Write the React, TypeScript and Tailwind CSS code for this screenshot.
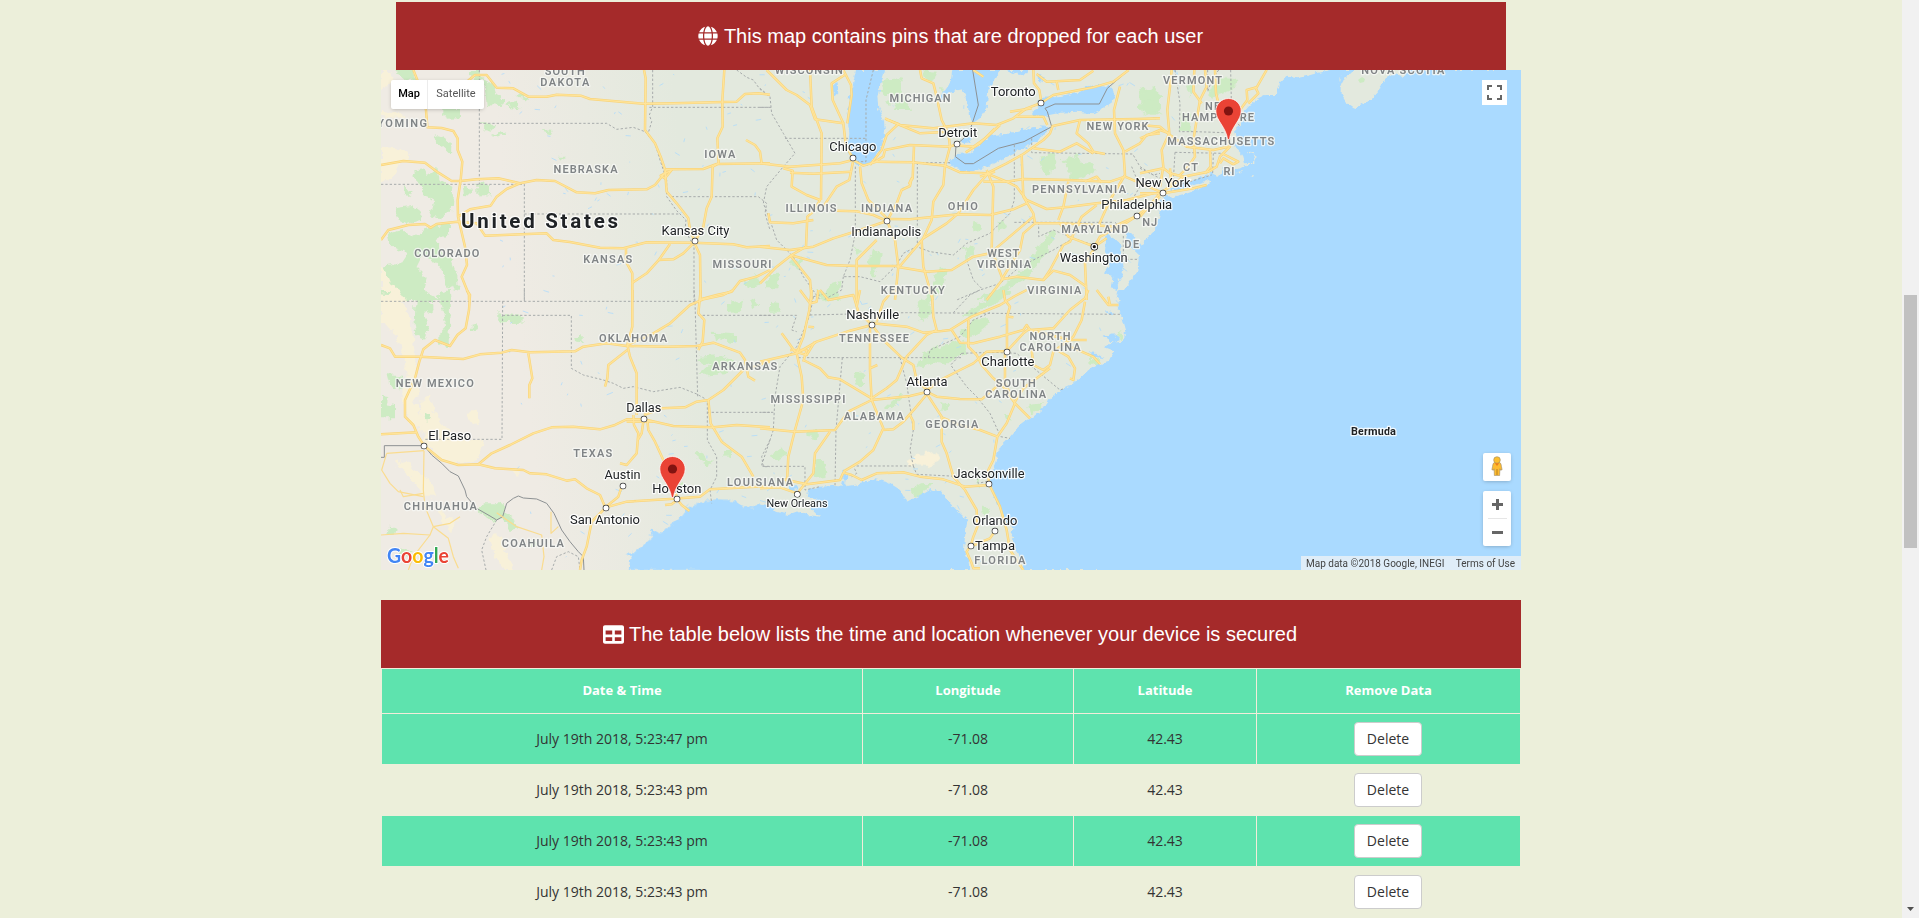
import React from "react";
import { FaGlobe, FaTable } from "react-icons/fa";

/* ------------------------------------------------------------------ */
/* Map geometry. Every sheet is surveyed at three units per map pixel. */
/* ------------------------------------------------------------------ */

type Sheet = {
  x: number;
  y: number;
  water: string[];
  land?: string[];
  sand?: string[];
  green: string[];
  roads: string[];
  thin?: string[];
  states: string[];
  nation?: string[];
};

const northWest: Sheet = {
  x: 370,
  y: 0,
  water: [],
  sand: [
    "M33 210H60L70 235L40 270L33 260Z",
    "M33 330L80 335L110 350L60 355L33 350Z",
    "M33 440L80 445L125 465L90 490L75 530L33 545Z",
    "M90 212L115 210L105 235Z",
    "M33 800L60 815L80 850L110 870L150 900H33Z",
  ],
  green: [
    "M80 210H125L140 235L150 242H110L90 225Z",
    "M300 210H325L340 235L370 250L380 285L402 300L392 318L350 315L342 240L310 240Z",
    "M217 327H270V355L235 356L217 345Z",
    "M408 312L440 305L452 325L425 322Z",
    "M440 282L470 290L478 300L450 294Z",
    "M335 370L375 372L370 392L345 388Z",
    "M362 408L408 390L400 404L375 410Z",
    "M516 390L545 392L540 406L522 400Z",
    "M568 470H590L585 480L570 478Z",
    "M188 404L215 412L245 432L243 460L222 440L195 420Z",
    "M278 560L308 563L306 584L282 582Z",
    "M322 551H360V586H322Z",
    "M133 508L160 505L170 525L205 500L212 540L250 560L245 630L215 655L180 650L195 600L165 590L158 560L135 545Z",
    "M100 560L125 575L118 592L98 580Z",
    "M75 625L120 618L152 630L150 665L110 672L80 655Z",
    "M55 700L100 690L140 710L180 680L240 670L240 700L200 720L215 760L245 780L262 830L262 870L235 860L215 810L190 780L160 760L140 800L170 830L160 870L215 900H110L90 870L60 850L40 800L90 790L110 760L65 740Z",
    "M1125 840L1160 825L1165 855L1130 868Z",
  ],
  roads: [
    "M130 210L150 260L168 330L172 382L215 384L250 393L263 415L263 450L277 485L272 540L263 600L264 650L285 740L291 795L275 830L297 885V900",
    "M33 495L100 483L165 488L205 518L245 543L272 543L320 538L385 535L450 550L500 540L555 543L620 577L675 580L715 570L830 568L855 555L885 518L890 508L1000 507L1040 492L1200 490",
    "M285 250L315 225L350 225L380 263L430 265L475 290L530 290L560 284L632 287L660 297L820 311L910 310L1060 306L1100 305L1125 282L1165 280L1200 284",
    "M822 210L827 235L825 390L855 430L872 470L885 508L890 575L920 610L955 655L960 690L975 725",
    "M1063 210L1057 300L1058 380L1042 415L1046 490L1028 500L1025 590L1010 625L1000 680L975 725",
    "M450 550L410 567L380 590L362 617L300 628L264 650",
    "M33 720L55 690L115 675L165 672L182 683L200 672L262 665L320 670L345 707L530 700L550 720L600 726L690 743L760 745L830 727L970 728L1090 733L1130 742L1200 738",
    "M768 745L768 785L787 820L787 900",
    "M785 850L830 820L868 778L900 732",
    "M865 780L910 778L940 760L970 730",
    "M973 728L990 765L992 900",
    "M992 898L1040 885L1085 875L1110 843L1160 830L1200 810",
    "M1128 420L1155 435L1170 455L1175 490",
    "M872 527L905 510L885 535Z",
  ],
  states: [
    "M328 210V553", "M33 553H463V900", "M463 642H925",
    "M328 370H710L740 388L790 382L825 395L855 430L870 480L890 540L890 590L920 632L948 660L945 690L972 740V900",
    "M848 210V320L838 345L845 365L836 395", "M838 322H1200",
    "M905 590H1165L1190 610L1185 640L1200 690", "M1100 210L1130 232L1150 240L1170 268L1200 290",
  ],
};

const northMiddle: Sheet = {
  x: 760,
  y: 0,
  water: [
    "M288 210L270 290L262 350L268 400L264 440L275 480L295 495L320 495L345 475L362 445L375 405L372 360L355 320L352 290L362 250L375 210Z",
    "M577 210L572 245L545 285L542 305L570 275L608 268L620 290L627 345L640 368L660 355L680 325L685 270L705 235L722 210Z",
    "M740 210L775 225L800 222L802 210Z",
    "M832 225L845 218L855 232L845 245L835 242Z",
    "M218 255L230 250L232 280L222 290Z",
    "M565 487L590 462L625 460L660 432L690 407L730 402L770 410L820 385L872 380L850 408L815 432L765 457L720 480L680 502L630 517L590 508Z",
    "M690 407L740 402L780 390L830 386L868 382L850 400L790 415Z",
    "M598 420L630 405L632 425L612 430Z",
    "M818 348L835 310L850 290L905 288L950 278L985 262L1015 255L1050 258L1064 275L1058 305L1035 322L1000 340L950 335L900 338L868 345L855 352L840 348Z",
    "M1200 672L1185 695L1160 715L1145 737L1128 715L1105 690L1095 700L1110 740L1137 765L1132 815L1108 845L1092 870L1078 900H1200Z",
    "M1040 700L1060 712L1085 735L1082 770L1092 800L1085 830L1070 850L1072 870L1055 865L1060 830L1030 820L1050 790L1035 750Z",
  ],
  sand: [],
  green: [
    "M360 240L420 235L430 270L450 330L405 330L395 285L370 285Z", "M375 305L395 310L385 320Z",
    "M490 210L530 215L522 245L500 240Z", "M530 258L555 260L548 275Z",
    "M840 470L875 462L888 500L860 520L838 505Z",
    "M905 478L950 465L965 490L1010 490L1005 515L965 535L925 540L925 505Z",
    "M1135 270L1185 262L1200 290V330L1165 345L1140 300Z",
    "M640 672L662 675L655 695L640 688Z", "M710 665L740 668L735 690L712 695Z",
    "M612 745L645 742L640 765L618 770Z",
    "M870 700L885 695L870 740L840 790L800 835L740 870L710 900H640L690 880L740 850L800 800L830 750Z",
    "M335 755L365 760L358 800L340 830L325 800Z", "M215 855L245 845L235 900H190L200 870Z",
    "M25 820L60 818L55 865L22 865Z", "M540 800L560 810L550 860L520 900H500L515 850Z", "M90 790L130 770L115 810Z",
    "M280 740L310 750L290 765Z",
  ],
  roads: [
    "M20 210L80 270L110 285L150 315L165 358L250 370L258 440L279 474",
    "M150 210L155 320L185 400L183 600", "M250 210L273 255L275 285L262 370", "M258 222L215 250L218 300L250 370",
    "M0 490L90 500L240 490L279 480L310 497L350 485L460 487L555 497L600 517L680 520L740 490L790 462L850 420L870 400L878 378L960 360L1130 357L1200 355",
    "M70 505L98 512L95 560L140 585L180 600L160 635L142 650L138 740L95 765", "M90 518L160 521L275 515",
    "M0 740L90 750L160 740L220 715L300 690L381 663", "M25 640L30 667L100 670L160 660",
    "M279 485L268 540L230 560L190 620", "M300 500L305 550L325 600L381 655", "M230 632L290 634L340 645L381 663",
    "M381 663L410 610L425 570L450 558L455 535L448 550L458 535L462 440", "M345 485L370 470L375 450L450 435L570 440L591 432",
    "M378 358L415 372L380 405L365 450L330 495", "M375 355L420 375L520 385L640 370L710 375",
    "M420 375L480 400L565 395", "M480 210L485 235L520 250L530 290L545 360L565 400L570 440L555 497L550 555L520 605L515 660L490 715",
    "M710 375L760 355L800 325L843 309L880 285L1000 262L1060 245L1106 210", "M600 437L640 440L680 412L720 375", "M617 457L660 430L705 385",
    "M820 210L822 250L838 270L843 300", "M750 335L815 325", "M765 350L850 350L862 375", "M890 245L895 270",
    "M830 222L860 245L960 240L1000 212", "M640 210L670 230",
    "M381 657L450 658L595 643L690 645L760 628L800 610", "M680 525L640 570L595 640L560 670L490 715L420 798L290 798L200 795L90 765",
    "M680 520L740 545L790 537L925 540L1050 545L1095 530L1200 575",
    "M680 510L700 560L695 750L728 838L680 900", "M670 545H740", "M660 530L705 515",
    "M785 465L790 590L820 640L825 670L900 670L1000 675L1060 680L1131 648", "M740 545L770 560L800 600L860 627L930 620L1010 610L1100 600L1180 580",
    "M825 670L790 700L780 750L725 838L770 830L850 840L870 810L910 735L930 725L955 670L965 650L1010 615",
    "M900 670L925 710L1003 740", "M1003 740L1020 710L1080 680L1131 648L1200 590", "M1010 690L1050 600L1095 525L1090 450L1065 400L1062 330L1080 260",
    "M1003 745L975 790L980 900", "M1003 740L1040 715", "M960 360L950 400L985 430L1000 455L1035 462", "M820 445L900 455L950 430L1000 460",
    "M1095 455L1140 430L1160 405L1200 400", "M381 663L405 720L415 800L405 900", "M485 720L490 800L510 870L518 900",
    "M410 800L500 815L575 810L640 770", "M350 720L290 780L290 900", "M90 765L150 840L155 900", "M95 765L50 800L0 850",
    "M850 840L880 812L930 825L980 860", "M640 770L690 760L820 650", "M895 660L910 620L925 545", "M975 545L1010 530L1025 548",
  ],
  states: [
    "M0 265L30 290L35 340L70 400L105 460L70 500L20 560L10 610L30 660L50 720L100 770L130 830L180 900",
    "M0 322H33", "M75 415H320", "M340 210L318 300V485H286", "M286 500V700L270 780L250 830H300L360 845L410 795L430 760L470 740L510 755L580 765L620 730L690 700L750 640L763 600V435",
    "M472 488V740", "M472 488H575", "M763 667H1060", "M815 415V458L1118 462L1140 500L1180 525L1200 520",
    "M836 667V710L880 690L940 715L1000 735", "M940 715L880 750L780 800L720 850L660 870L590 900", "M620 780L640 840L665 865", "M250 830L245 870L190 900", "M1065 667L1090 690V778H1137", "M1110 610L1140 560L1115 500",
  ],
  nation: ["M638 210L655 315L635 375L628 400L588 435L586 470L615 491H640L715 445L792 425L875 380L862 335L855 325L885 312H1018L1042 265L1106 210"],
};

const northEast: Sheet = {
  x: 1140,
  y: 0,
  water: [
    "M570 210L530 220L500 228L470 235L440 230L420 250L410 285L380 285L350 300L330 315L312 335L300 352L300 378L285 392L290 410L300 420L282 432L290 450L305 465L312 490L335 488L343 478L338 462L325 457L335 455L346 468V492H320L298 505L270 517L252 500L240 527L215 522L190 530L160 540L125 548L100 562L90 570L120 570L205 540L215 545L190 562L140 580L100 590L75 588L62 600L66 620L58 650L45 690L25 712L5 738L0 735V900H1143V210Z",
    "M107 210L112 235L118 290L110 230L103 210Z",
  ],
  land: [
    "M650 210L620 225L605 255L605 285L620 310L643 326L665 312L690 300L715 272L735 240L760 222L790 228L800 210Z",
    "M286 520L305 513L303 520Z", "M330 528L345 525L342 531Z", "M592 250L605 230L600 235Z",
  ],
  green: [
    "M0 265L20 270L10 280L0 282Z", "M0 310L35 300L45 330L65 345L25 345L0 335Z", "M122 340L150 345L145 395L120 392Z",
    "M205 275L240 230L290 240L285 262L240 285L215 290Z", "M140 250L160 255L155 285Z",
  ],
  roads: [
    "M95 210L90 260L82 330L88 400L65 450L70 500L60 560", "M195 210L200 260L180 300L160 420L165 470L145 500L115 530", "M225 210L228 280L245 350L270 420",
    "M380 210L350 262L320 270L322 300L285 350L265 420L270 440L240 470L230 500L205 515L130 530L90 560L60 580",
    "M0 375L60 380L90 405L140 440L220 450L265 440", "M250 462L295 485L280 493L250 475L240 490", "M0 415L60 390L88 400",
    "M0 520L70 505L90 520L130 530", "M69 580L160 565L200 555", "M0 580L60 580L0 650", "M163 210L160 275L185 310", "M210 450L212 500L195 520",
    "M90 505L95 560", "M345 260L355 280L325 310",
  ],
  states: ["M105 210L120 310L118 395H165L255 398", "M203 210V275", "M272 210L275 350L300 378", "M105 457L250 460", "M105 457L100 540", "M220 460L218 520", "M0 505L60 535", "M236 210L215 240L203 275", "M100 560L215 525"],
};

const southWest: Sheet = {
  x: 370,
  y: 290,
  water: ["M776 840L782 800L765 790L795 785L820 765L850 740L840 715L865 730L900 710L935 680L955 655L990 635L1040 628L1090 630L1120 648L1150 655L1170 640L1200 655V840Z"],
  sand: [
    "M33 0H70L110 60L125 100L130 160L140 220L135 270L145 310L130 330L150 360L160 420L120 400L95 330L110 260L100 180L60 110L33 100Z",
    "M155 330L180 320L185 345L215 400L260 440L340 450L330 500L280 520L220 510L170 470L150 400Z",
    "M290 365L320 362L330 400L300 395Z", "M75 520L110 510L130 540L180 570L200 620L160 620L120 560Z", "M360 740L380 730L400 760L430 840H400L370 790Z", "M200 640L230 680L260 690L250 730L215 700Z",
    "M425 540L450 545L440 560Z",
  ],
  green: [
    "M135 0H155V20L190 40V60L165 75L180 110L165 150L140 140L132 80Z", "M205 10L240 0L243 60L240 110L235 165L205 160V130L225 110L220 60Z", "M33 0H60L50 12L33 10Z",
    "M385 70L455 78L455 95L385 97Z", "M610 138H635V158L612 152Z", "M33 318L55 322L50 340L78 345V385L33 385Z", "M50 255L105 260L100 300L70 295L55 275Z",
    "M1068 40L1120 30L1110 65L1075 70Z", "M1140 30L1165 40L1150 55Z", "M1030 125L1095 130V160L1035 150Z", "M990 200L1050 195L1100 215L1060 250L985 255L1020 225L985 215Z",
    "M980 490L1005 488L1000 510L1030 515L1010 530L985 515Z", "M1060 480H1080V500H1060Z", "M345 640L400 640L405 680L370 695L340 675L318 665Z", "M400 665L425 680L445 715L425 720L405 695Z",
    "M60 710L80 715L75 735L55 730Z", "M90 775L125 780L115 800L90 795Z", "M160 375L185 370L180 392L162 390Z", "M305 105L325 100L320 115L305 118Z", "M475 750L500 755L490 775Z", "M925 580L945 575L940 600Z",
  ],
  roads: [
    "M290 0L300 15L297 60L287 115L262 135L240 168L195 150L160 178L148 215L135 265L105 330L105 380L130 405L145 440L162 467L215 510L265 525L325 523L375 535L460 540L480 550L530 553L590 572L615 568L650 595L690 615L705 650",
    "M33 165L60 175L75 200L150 200L280 207L330 193L395 188L425 180L480 187L615 184L640 170L710 160L770 168L890 170L980 168L1030 158L1110 188L1125 210L1135 260L1155 272",
    "M475 190L487 265L478 285V325", "M787 0V110L772 165L780 200L800 250V375", "M772 180L715 225L712 265L705 290",
    "M772 165L850 130L900 100L960 45L1000 28L1060 15L1090 0", "M992 0L985 70L1003 90L998 155L985 180", "M33 433L140 427",
    "M325 523L365 490L420 465L490 430L545 412L610 410L690 418L735 405L770 388L822 388L910 408L1030 412L1100 405L1200 412",
    "M822 375L875 355L945 352L980 335L1015 330L1060 300L1120 240L1200 215", "M1015 330L1022 400L1055 455L1115 500L1150 560",
    "M832 390L835 420L855 455L880 510L905 560L921 625", "M790 375L792 405L805 430L800 490L770 525L750 520", "M820 395L815 430L803 450", "M770 395H850",
    "M755 590L745 620L708 650", "M708 652L770 635L900 627L990 620L1020 598L1200 588", "M708 652L665 695L650 770L635 810L630 840", "M921 627L935 645L958 663", "M885 645L905 643L921 630",
  ],
  thin: ["M50 490L35 540L60 580L85 605L160 620", "M162 482L160 600L165 650L190 710L235 745L250 800L265 835", "M33 735L100 730L180 735L190 710", "M180 735L130 800L115 840", "M50 490L162 482", "M380 668L440 710L515 735L522 800L515 840", "M543 665V730L565 710", "M90 600L100 620L160 610", "M190 710L240 700L270 680"],
  states: [
    "M33 34H975", "M463 0V34", "M398 34L396 448H162", "M398 76H604V235L640 255L700 270L730 280L760 295L790 290L850 305L930 292L980 312L1012 330V450L1040 500V560L1020 600L1025 640",
    "M972 0L975 34L983 320", "M985 76H1200", "M1012 367H1200", "M1200 450L1175 500L1180 530H1200", "M380 690L350 740L335 780L348 840", "M545 840L560 800L595 785L625 800L630 840",
  ],
  nation: ["M33 502H43V467H162L185 495L215 520L240 545L265 558L285 600L290 620L320 655L360 678L380 690L398 680L410 640L430 625L445 618L460 624L500 627L530 640L552 670L575 720L600 755L625 785L640 800L642 840"],
};

const southMiddle: Sheet = {
  x: 760,
  y: 290,
  water: [
    "M1075 0L1070 20L1082 35L1070 50L1085 75L1098 120L1088 155L1055 158L1035 172L1062 182L1045 215L1000 228L960 262L935 285L900 300L870 325L850 355L820 380L795 395L775 410L750 440L725 465L712 490L705 520L697 545L693 575L700 610L718 650L735 690L760 715L755 735L765 770L780 810L792 840H1440V0Z",
    "M0 640L20 645L50 665L85 675L120 662L140 675L180 680L155 655L170 625L140 620L145 598L180 590L225 588L245 590L250 572L262 588L300 582L345 568L380 575L420 600L440 635L480 615L510 597L545 605L570 640L600 670L622 690L615 740L612 780L622 800L630 840H0Z",
    "M1030 140L1060 130L1080 150L1060 160Z", "M1035 205L1000 200L985 190L1010 192Z", "M250 540L262 560L258 580L250 565Z", "M80 590L110 585L115 598L90 600Z",
    "M1035 60L1060 70L1050 76Z",
  ],
  sand: ["M440 515L480 490L530 485L540 510L510 528L450 525Z"],
  green: [
    "M475 225L490 190L540 170L600 150L625 165L620 190L580 205L560 225L520 215L490 232Z", "M600 130L640 90L680 75L690 100L650 130L615 150Z", "M630 60L690 25L740 0H760L740 20L690 45L650 75L600 85Z",
    "M470 60L485 25L510 30L515 70L490 95L475 85Z", "M282 252L310 250L315 285L290 285Z", "M375 350L400 330L425 310V330L395 358Z", "M160 515L195 512L200 560L170 565Z", "M30 490L70 475L75 495L50 510L32 505Z",
    "M138 422H170V445L140 440Z", "M450 598L480 580L520 578L500 605L465 625Z", "M805 345L850 340L830 360L810 375Z", "M990 200L1015 205L1012 225L992 220Z", "M540 345L560 335L568 345L550 360Z", "M165 0L190 10L220 0V30L190 35Z",
    "M30 35L60 40L65 65L30 65Z", "M665 650L685 655L690 680L668 675Z", "M730 375H750V388H730Z", "M650 570L660 560L655 590Z", "M1075 125L1090 128L1088 148L1075 150Z",
  ],
  roads: [
    "M336 105L270 122L170 155L110 190L0 215", "M340 100L440 110L490 128L545 123L570 120L635 80L720 45L765 18L800 0", "M155 0L148 60L130 140L110 190L125 260L130 330L105 420L85 500L80 590",
    "M180 0L205 30L280 15L295 65L336 105", "M300 0L290 50", "M65 130L80 150L105 185L140 195L165 155", "M90 180H140L130 215", "M145 110L162 112", "M400 0L370 35L350 95",
    "M330 110L330 240L335 330L370 415L340 480L300 515L250 545", "M340 110L370 150L425 203L460 225L470 270L501 300", "M515 0L520 80L530 120L500 135L440 200L410 270L380 295L335 325",
    "M0 415L105 425L225 420L265 365L335 330L450 318L500 306", "M130 210L180 235L205 262L240 268L335 325", "M575 120L600 158L640 160L720 140L790 120L800 105L810 120L880 115L930 60L975 25L985 0",
    "M625 90L625 170L650 195L665 225L700 265L730 290L765 340L810 385", "M501 306L530 320L600 327L665 328L710 290L735 280", "M501 300L545 268L600 240L640 220L680 185L741 183L790 130L810 115",
    "M741 183V80L750 50L735 30L730 0", "M760 82L745 80", "M735 190V280L765 340L740 400L712 440L700 510L685 540L687 582L720 650L740 720L750 780L790 840",
    "M810 120L850 130L930 150L980 150", "M975 35L965 90L940 140L880 185L870 225L850 240L820 225L815 180", "M870 235L790 295L765 335", "M930 170L1000 200L1020 222", "M890 180L925 200L945 235L940 270L930 265",
    "M501 312L545 380V455L560 490L580 560L615 600L650 660L652 710L640 740L633 765L620 785L635 820L640 835H660", "M545 382L600 405L660 420L712 440", "M501 312L465 355L430 395L400 418L370 420", "M450 375L460 395V420",
    "M0 595L60 592L112 610", "M70 568L140 583L240 570L250 548L275 555L305 570L350 550L430 547L480 560L550 568L615 590L687 585", "M210 425L165 490L160 550L112 610", "M705 723L690 745L650 762L633 768",
    "M1010 0L1045 45L1075 45", "M1045 20L1050 45", "M330 235L352 225", "M120 0L150 40L170 35L175 0",
  ],
  states: [
    "M0 76H110L95 120L110 125", "M160 20L150 75L110 170L60 230L45 320L40 420L5 525V529H135V600L180 590", "M150 75L440 68L1085 73", "M115 203H605", "M247 203L228 420L225 590",
    "M420 203L440 280L460 420L450 480L460 528H280L290 550L275 560", "M460 528L470 553L650 562L655 580L690 572", "M605 190L572 225L620 290L650 320L690 370L722 440L750 445", "M605 190L700 187L770 190L810 225L900 300L915 295",
    "M505 203L510 180L600 140L640 90L690 68", "M160 20L200 10", "M580 68L630 15L660 0", "M40 367H0",
  ],
};

const sheets: Sheet[] = [northWest, northMiddle, northEast, southWest, southMiddle];

/* Small streams and ponds, scattered deterministically over the plains. */
const streams: string[] = (() => {
  let seed = 71;
  const next = () => {
    seed = (seed * 16807) % 2147483647;
    return seed / 2147483647;
  };
  const out: string[] = [];
  for (let i = 0; i < 330; i++) {
    const x = 500 + next() * 680;
    const y = 74 + next() * 490;
    const dx = (next() - 0.4) * 9;
    const dy = (next() - 0.4) * 6;
    out.push(`M${x.toFixed(1)} ${y.toFixed(1)}l${dx.toFixed(1)} ${dy.toFixed(1)}`);
  }
  return out;
})();

type Label = [text: string, cx: number, baseline: number, width: number];

const stateLabels: Label[] = [
  ["SOUTH", 564.7, 74.7, 40], ["DAKOTA", 564.8, 85.7, 49], ["WYOMING", 396.5, 127, 61], ["IOWA", 719.8, 158, 31], ["NEBRASKA", 585.5, 173, 64],
  ["COLORADO", 446.8, 257, 65], ["KANSAS", 607.8, 263, 49], ["MISSOURI", 742, 268, 59], ["WISCONSIN", 808.8, 73.5, 68], ["MICHIGAN", 920, 102, 61],
  ["NEW YORK", 1117.5, 130, 62], ["ILLINOIS", 811, 212, 51], ["INDIANA", 886.5, 212, 51], ["OHIO", 962.8, 210, 30], ["PENNSYLVANIA", 1079, 193, 94],
  ["MARYLAND", 1094.8, 233, 67], ["DE", 1131.7, 248, 15], ["NJ", 1149.7, 225.7, 15], ["WEST", 1003.3, 257, 32], ["VIRGINIA", 1004, 268, 54],
  ["KENTUCKY", 912.8, 294, 64], ["VIRGINIA", 1054.3, 294, 54], ["VERMONT", 1192.5, 84, 59], ["NEW", 1218, 110, 26], ["HAMPSHIRE", 1218, 121, 72],
  ["MASSACHUSETTS", 1220.8, 145, 107], ["CT", 1190.5, 171, 15], ["RI", 1229, 175, 11], ["NOVA SCOTIA", 1402.8, 73.5, 83], ["OKLAHOMA", 633, 342, 68],
  ["ARKANSAS", 744.8, 370, 65], ["NEW MEXICO", 434.8, 387, 78], ["TEXAS", 592.7, 457, 39], ["LOUISIANA", 760, 486, 66], ["CHIHUAHUA", 440.3, 510, 73],
  ["COAHUILA", 532.8, 547, 62], ["TENNESSEE", 874, 342, 70], ["NORTH", 1050, 340, 41], ["CAROLINA", 1050, 351, 61], ["SOUTH", 1015.7, 387, 40],
  ["CAROLINA", 1015.7, 398, 61], ["MISSISSIPPI", 808, 403, 75], ["ALABAMA", 873.8, 420, 60], ["GEORGIA", 951.8, 428, 53], ["FLORIDA", 999.8, 564, 51],
];

const cityLabels: Label[] = [
  ["Kansas City", 695.5, 235.5, 68], ["Toronto", 1013.3, 96.7, 45], ["Detroit", 957.7, 137.7, 39], ["Chicago", 852.8, 151.7, 47], ["Philadelphia", 1136.7, 209.7, 71],
  ["New York", 1163, 187.7, 55], ["Indianapolis", 886.3, 236.5, 70], ["Washington", 1093.7, 262.5, 68], ["Dallas", 643.8, 412.5, 35], ["El Paso", 449.7, 440.5, 43],
  ["Austin", 622.5, 479.5, 36], ["Houston", 676.8, 493.7, 49], ["San Antonio", 605, 524, 70], ["Nashville", 872.7, 319.7, 53], ["Charlotte", 1007.8, 366.5, 53],
  ["Atlanta", 927, 386.7, 41], ["Jacksonville", 989, 478.7, 71], ["Orlando", 994.8, 525.7, 45], ["Tampa", 995, 550.7, 40],
];

const cityDots: [number, number][] = [
  [695, 241], [1041, 103], [957, 144], [853, 158], [1137, 216], [1163, 193], [887, 221], [644, 419], [424, 446], [623, 486], [677, 499],
  [606, 508], [872, 325], [1007, 352], [927, 392], [989, 484], [797.3, 494.3], [995, 531], [971, 546],
];

const toSheet = (s: Sheet) => `translate(${s.x} ${s.y}) scale(0.33333)`;

function Paths({ list }: { list?: string[] }) {
  return (
    <>
      {(list ?? []).map((d, i) => (
        <path key={i} d={d} />
      ))}
    </>
  );
}

function Layer({ pick, ...rest }: { pick: keyof Sheet } & React.SVGProps<SVGGElement>) {
  return (
    <g {...rest}>
      {sheets.map((s, i) => (
        <g key={i} transform={toSheet(s)}>
          <Paths list={s[pick] as string[] | undefined} />
        </g>
      ))}
    </g>
  );
}

function Pin({ x, y }: { x: number; y: number }) {
  return (
    <g transform={`translate(${x} ${y})`}>
      <path
        d="M0 -41C-7 -41 -12.7 -35.4 -12.7 -28.5C-12.7 -19 -2.6 -13 -0.9 0H0.9C2.6 -13 12.7 -19 12.7 -28.5C12.7 -35.4 7 -41 0 -41Z"
        fill="#ea4335"
        stroke="#fff"
        strokeOpacity=".75"
        strokeWidth="1"
      />
      <circle cx="0" cy="-28.5" r="4.6" fill="#811411" />
    </g>
  );
}

function MapCanvas() {
  return (
    <svg className="block h-[500px] w-[1140px]" viewBox="381 70 1140 500" fontFamily="Roboto, sans-serif">
      <defs>
        <linearGradient id="land" gradientUnits="userSpaceOnUse" x1="520" y1="340" x2="700" y2="320">
          <stop offset="0" stopColor="#efebe4" />
          <stop offset=".5" stopColor="#e9eae1" />
          <stop offset="1" stopColor="#e3e9de" />
        </linearGradient>
        <filter id="ragged" filterUnits="userSpaceOnUse" x="360" y="50" width="1180" height="540">
          <feTurbulence type="fractalNoise" baseFrequency="0.14" numOctaves="3" seed="4" />
          <feDisplacementMap in="SourceGraphic" scale="9" xChannelSelector="R" yChannelSelector="G" />
        </filter>
        <filter id="coast" filterUnits="userSpaceOnUse" x="360" y="50" width="1180" height="540">
          <feTurbulence type="fractalNoise" baseFrequency="0.2" numOctaves="2" seed="9" />
          <feDisplacementMap in="SourceGraphic" scale="6" xChannelSelector="R" yChannelSelector="G" />
        </filter>
      </defs>
      <rect x="381" y="70" width="1140" height="500" fill="url(#land)" />
      <Layer pick="sand" fill="#f8f1d9" filter="url(#ragged)" />
      <Layer pick="green" fill="#cdebc3" filter="url(#ragged)" />
      <g stroke="#aadaff" strokeWidth=".9" strokeLinecap="round" opacity=".8">
        <Paths list={streams} />
      </g>
      <Layer pick="water" fill="#aadaff" filter="url(#coast)" />
      <rect x="1155" y="280" width="366" height="290" fill="#aadaff" />
      <rect x="1100" y="460" width="421" height="110" fill="#aadaff" />
      <rect x="1514" y="70" width="7" height="500" fill="#aadaff" />
      <rect x="700" y="560" width="250" height="10" fill="#aadaff" />
      <Layer pick="land" fill="#e3e9de" filter="url(#coast)" />
      <path d="M1358 80l4-3 3 2-1 3-4 1z" fill="#cdebc3" />
      <Layer pick="states" fill="none" stroke="#a7abab" strokeWidth="3" strokeDasharray="7 6" />
      <Layer pick="nation" fill="none" stroke="#8d9193" strokeWidth="3" />
      <Layer pick="roads" fill="none" stroke="#f9d57c" strokeWidth="7.5" strokeLinejoin="round" />
      <Layer pick="roads" fill="none" stroke="#ffe49a" strokeWidth="3.5" strokeLinejoin="round" />
      <Layer pick="thin" fill="none" stroke="#fadc8f" strokeWidth="3.6" strokeLinejoin="round" />

      <g textAnchor="middle" strokeLinejoin="round" paintOrder="stroke">
        <g fontSize="11" fontWeight="600" fill="#808486" stroke="#f6f7f3" strokeOpacity=".85" strokeWidth="2.5">
          {stateLabels.map(([t, x, y, w], i) => (
            <text key={i} x={x} y={y} textLength={w}>
              {t}
            </text>
          ))}
        </g>
        <g fill="#fff" stroke="#333" strokeWidth="1.4">
          {cityDots.map(([x, y], i) => (
            <circle key={i} cx={x} cy={y} r="2.6" />
          ))}
        </g>
        <circle cx="1094.3" cy="246.7" r="3" fill="#fff" stroke="#111" strokeWidth="1.5" />
        <circle cx="1094.3" cy="246.7" r="1.6" fill="#111" />
        <g fontSize="13.4" fill="#202326" stroke="#fff" strokeOpacity=".85" strokeWidth="2.5">
          {cityLabels.map(([t, x, y, w], i) => (
            <text key={i} x={x} y={y - 0.5} textLength={w} lengthAdjust="spacingAndGlyphs">
              {t}
            </text>
          ))}
          <text x="797" y="506.5" fontSize="11" textLength="61" lengthAdjust="spacingAndGlyphs">
            New Orleans
          </text>
          <text x="1373.5" y="434.5" fontSize="11" fontWeight="700" textLength="45">
            Bermuda
          </text>
          <text x="539.5" y="228" fontSize="20.5" fontWeight="700" textLength="157">
            United States
          </text>
        </g>
      </g>
      <Pin x={1228.5} y={139.500} />
      <Pin x={672.5} y={497.500} />
      <text x="387" y="563" fontSize="21.5" fontFamily="Lato, sans-serif" fontWeight="700" textLength="62" lengthAdjust="spacingAndGlyphs" stroke="#fff" strokeWidth="2" strokeLinejoin="round" paintOrder="stroke">
        <tspan fill="#4285f4">G</tspan>
        <tspan fill="#ea4335">o</tspan>
        <tspan fill="#fbbc05">o</tspan>
        <tspan fill="#4285f4">g</tspan>
        <tspan fill="#34a853">l</tspan>
        <tspan fill="#ea4335">e</tspan>
      </text>
    </svg>
  );
}

function MapControls() {
  return (
    <div className="font-['Roboto',sans-serif]">
      <div className="absolute top-[10px] left-[10px] flex h-[29px] w-[93px] rounded-[2px] bg-white text-[11px] shadow-[0_1px_4px_-1px_rgba(0,0,0,0.3)]">
        <div className="flex w-[37px] items-center justify-center border-r border-[#ececec] font-medium text-black">Map</div>
        <div className="flex flex-1 items-center justify-center text-[#565656]">Satellite</div>
      </div>
      <div className="absolute top-[10px] right-[14px] flex size-[25px] items-center justify-center bg-white">
        <svg className="size-[15px]" viewBox="0 0 15 15" fill="none" stroke="#666" strokeWidth="2">
          <path d="M1 5V1H5M10 1H14V5M14 10V14H10M5 14H1V10" />
        </svg>
      </div>
      <div className="absolute right-[10px] bottom-[24px] flex flex-col gap-[10px]">
        <div className="flex size-[28px] items-start justify-center rounded-[2px] bg-white pt-[3px] shadow-[0_1px_4px_-1px_rgba(0,0,0,0.3)]">
          <svg className="h-[20px] w-[12px]" viewBox="0 0 12 20">
            <path d="M3.200 6.600h5.600c1 .5 1.400 2 1.600 3.700l.7 3.400-1.600.5-.6-1.400-.3 6.800H3.400l-.3-6.800-.6 1.400-1.600-.5.7-3.400C1.800 8.600 2.200 7.100 3.200 6.600z" fill="#fdbb30" stroke="#9a8a6a" strokeWidth=".6" />
            <circle cx="6" cy="4" r="3.3" fill="#fdbf2d" stroke="#9a8a6a" strokeWidth=".6" />
            <path d="M3.800 7.200h4.400L6 10z" fill="#ee7d1a" />
            <path d="M6 13v6" stroke="#b07a1c" strokeWidth=".9" />
          </svg>
        </div>
        <div className="flex h-[55px] w-[28px] flex-col items-center rounded-[2px] bg-white shadow-[0_1px_4px_-1px_rgba(0,0,0,0.3)]">
          <div className="flex h-[27px] items-center">
            <svg className="size-[11px]" viewBox="0 0 11 11" stroke="#666" strokeWidth="3">
              <path d="M0 5.500H11M5.500 0V11" />
            </svg>
          </div>
          <div className="h-px w-[19px] bg-[#e6e6e6]" />
          <div className="flex h-[27px] items-center">
            <svg className="size-[11px]" viewBox="0 0 11 11" stroke="#666" strokeWidth="3">
              <path d="M0 5.500H11" />
            </svg>
          </div>
        </div>
      </div>
      <div className="absolute right-0 bottom-0 flex h-[14px] w-[220px] items-center justify-between bg-[#f5f5f5]/70 pr-[6px] pl-[5px] text-[10px] whitespace-nowrap text-[#444]">
        <span>Map data ©2018 Google, INEGI</span>
        <span>Terms of Use</span>
      </div>
    </div>
  );
}

const rows = ["July 19th 2018, 5:23:47 pm", "July 19th 2018, 5:23:43 pm", "July 19th 2018, 5:23:43 pm", "July 19th 2018, 5:23:43 pm"];
const columns = "grid grid-cols-[480px_210px_182px_263px] gap-px";

function Row({ time, shaded }: { time: string; shaded: boolean }) {
  const cell = shaded ? "flex items-center justify-center bg-[#5ee3ae]" : "flex items-center justify-center";
  return (
    <div className={`${columns} h-[50px] ${shaded ? "bg-[#f3ecda]" : ""}`}>
      <div className={`${cell} pb-[2px]`}>{time}</div>
      <div className={`${cell} pb-[2px]`}>-71.08</div>
      <div className={`${cell} pb-[2px]`}>42.43</div>
      <div className={`${cell} pr-px`}>
        <button className="h-[34px] w-[68px] rounded-[4px] border border-[#ccc] bg-white pb-px">Delete</button>
      </div>
    </div>
  );
}

export default function App() {
  return (
    <div className="flex h-[918px] w-full overflow-hidden bg-[#ecefda]">
      <main className="flex flex-1 flex-col items-center pt-[2px]">
        <h2 className="flex h-[68px] w-[1110px] items-center justify-center gap-[6px] bg-[#a52a2a] pr-[1px] font-['Liberation_Sans',sans-serif] text-[20px] text-white">
          <FaGlobe className="size-[20px]" />
          <span>This map contains pins that are dropped for each user</span>
        </h2>
        <section className="relative h-[500px] w-[1140px] overflow-hidden">
          <MapCanvas />
          <MapControls />
        </section>
        <h2 className="mt-[30px] flex h-[68px] w-[1140px] shrink-0 items-center justify-center gap-[5px] bg-[#a52a2a] pr-[2px] font-['Liberation_Sans',sans-serif] text-[20px] text-white">
          <FaTable className="size-[21px]" />
          <span>The table below lists the time and location whenever your device is secured</span>
        </h2>
        <section className="flex w-[1140px] flex-col gap-px border-t border-[#f3ecda] px-px font-['Trebuchet_MS','Open_Sans',sans-serif] text-[14px] text-[#333]">
          <div className={`${columns} -mb-px h-[45px] border-b border-[#f3ecda] bg-[#f3ecda] text-[13px] font-bold text-white`}>
            {["Date & Time", "Longitude", "Latitude", "Remove Data"].map((h) => (
              <div key={h} className="flex items-center justify-center bg-[#5ee3ae] pb-[1px]">
                {h}
              </div>
            ))}
          </div>
          {rows.map((time, i) => (
            <Row key={i} time={time} shaded={i % 2 === 0} />
          ))}
        </section>
      </main>
      <aside className="flex h-full w-[17px] shrink-0 flex-col items-center bg-[#f1f1f1] pt-[295px]">
        <div className="h-[253px] w-[13px] bg-[#c1c1c1]" />
        <svg className="mt-auto mb-[7px] h-[4px] w-[7px]" viewBox="0 0 7 4" fill="#505050">
          <path d="M0 0H7L3.500 4Z" />
        </svg>
      </aside>
    </div>
  );
}
